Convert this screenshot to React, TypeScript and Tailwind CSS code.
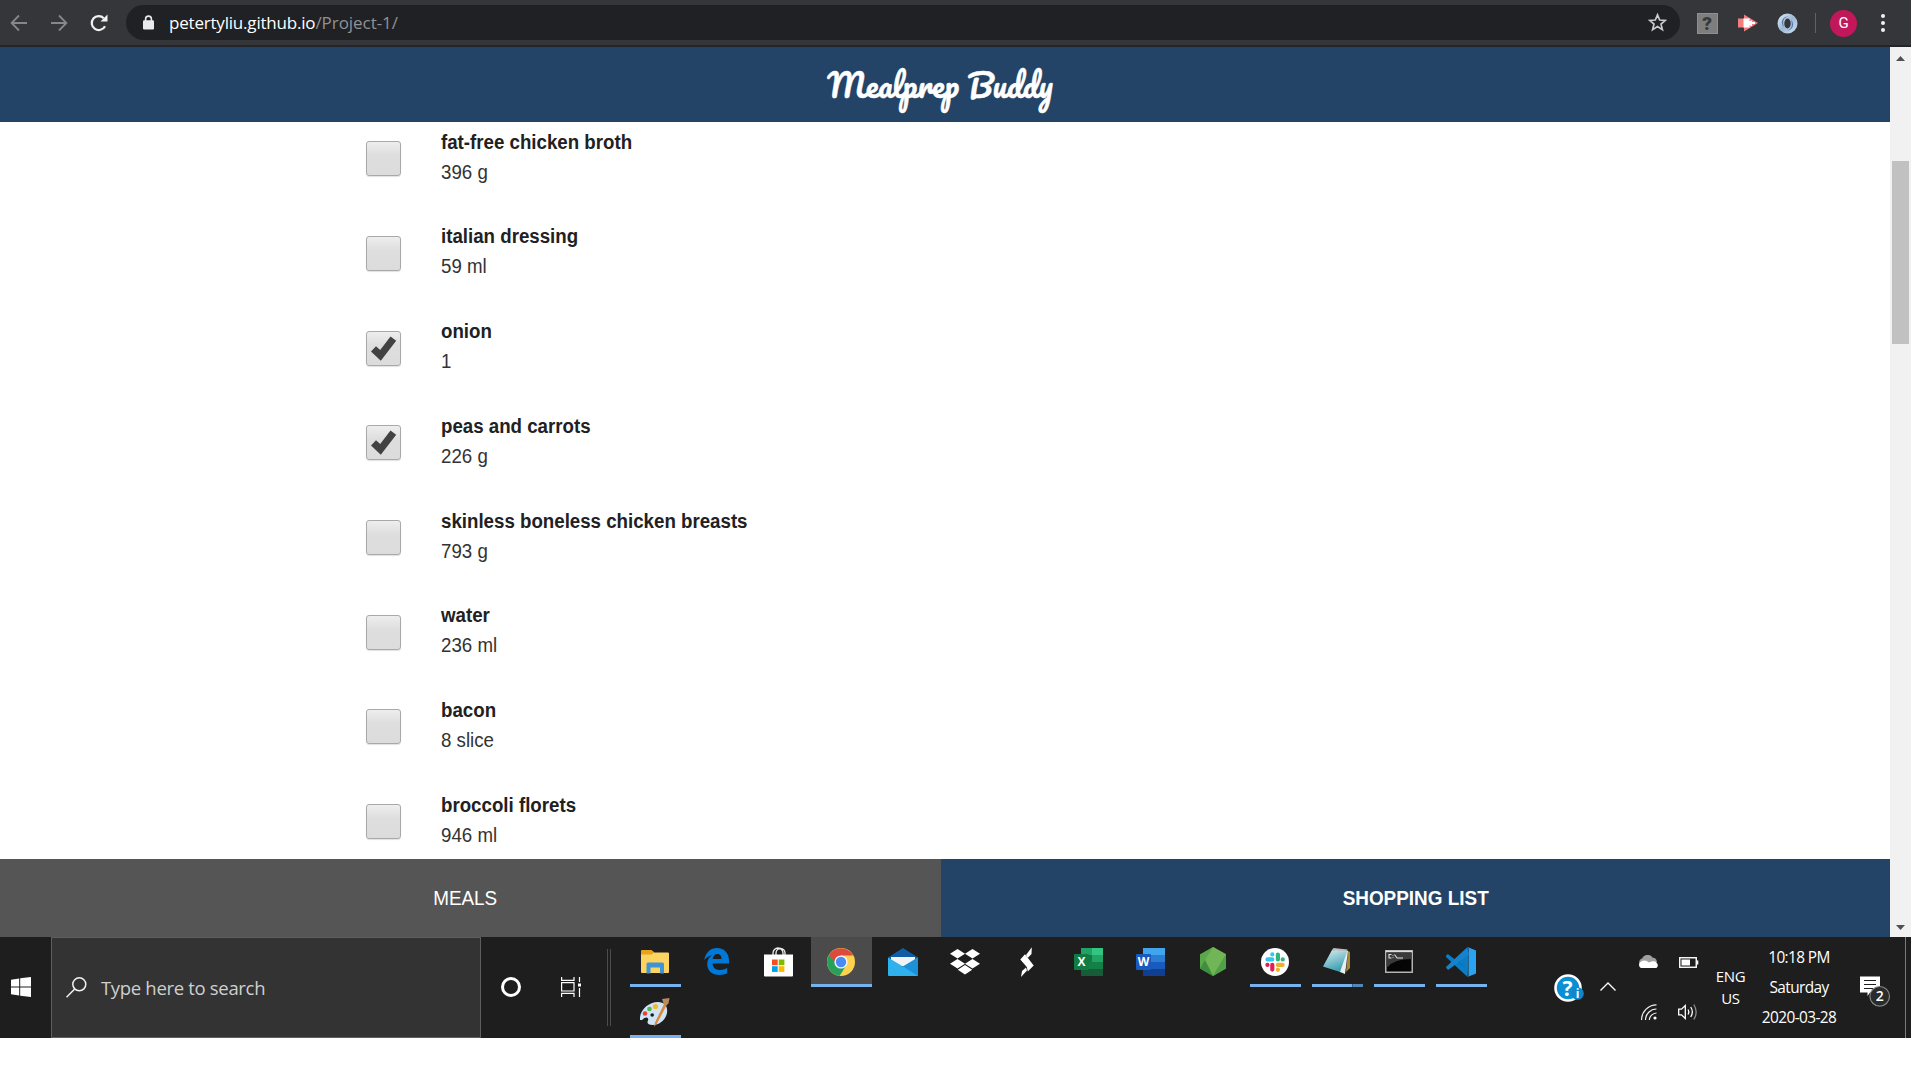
import React from "react";

const ui = "font-['Open_Sans','Noto_Sans',sans-serif]";

const items = [
  { name: "fat-free chicken broth", amount: "396 g", checked: false },
  { name: "italian dressing", amount: "59 ml", checked: false },
  { name: "onion", amount: "1", checked: true },
  { name: "peas and carrots", amount: "226 g", checked: true },
  { name: "skinless boneless chicken breasts", amount: "793 g", checked: false },
  { name: "water", amount: "236 ml", checked: false },
  { name: "bacon", amount: "8 slice", checked: false },
  { name: "broccoli florets", amount: "946 ml", checked: false },
];

function Toolbar() {
  return (
    <div className="flex h-[47px] w-full shrink-0 items-start border-b-2 border-[#222529] bg-[#35363a] pt-[5px]">
      <div className="flex h-[36px] w-[38px] items-center justify-center">
        <svg width="18" height="18" viewBox="0 0 18 18" fill="none" stroke="#85878a" strokeWidth="1.8">
          <path d="M17 9H2M9 1.5L1.6 9L9 16.5" />
        </svg>
      </div>
      <div className="flex h-[36px] w-[41px] items-center justify-center">
        <svg width="18" height="18" viewBox="0 0 18 18" fill="none" stroke="#85878a" strokeWidth="1.8">
          <path d="M1 9H16M9 1.5L16.4 9L9 16.5" />
        </svg>
      </div>
      <div className="flex h-[36px] w-[40px] items-center justify-center">
        <svg width="18" height="18" viewBox="0 0 18 18">
          <path d="M15 12.2A7 7 0 1 1 13.8 4.2" fill="none" stroke="#f1f1f2" strokeWidth="2.2" />
          <path d="M17.5 0.5V7.5H10.5Z" fill="#f1f1f2" />
        </svg>
      </div>
      <div className="ml-[7px] flex h-[35px] w-[1554px] items-center rounded-full bg-[#202124] pl-[17px] pr-[13px]">
        <svg width="11" height="15" viewBox="0 0 11 15">
          <path d="M2.6 6V4A2.9 2.9 0 0 1 8.4 4V6" fill="none" stroke="#e8eaed" strokeWidth="1.6" />
          <rect x="0" y="5.2" width="11" height="9.2" rx="1.2" fill="#e8eaed" />
        </svg>
        <span className={`ml-[15px] flex-1 whitespace-nowrap text-[17px] leading-[35px] tracking-[-0.2px] text-white ${ui}`}>
          petertyliu.github.io<span className="tracking-[-0.05px] text-[#8f9194]">/Project-1/</span>
        </span>
        <svg width="19" height="19" viewBox="0 0 19 19" fill="none" stroke="#c8cacd" strokeWidth="1.7">
          <path d="M9.5 1.8L11.7 7L17.3 7.4L13 11.1L14.4 16.6L9.5 13.6L4.6 16.6L6 11.1L1.7 7.4L7.3 7Z" />
        </svg>
      </div>
      <div className="ml-[7px] flex h-[36px] items-center">
        <div className="flex w-[40px] justify-center">
          <div className="flex h-[21px] w-[21px] items-center justify-center border border-[#8f8f8f] bg-[#7e7e7e] font-['Roboto',sans-serif] text-[19px] font-black leading-none text-[#37383a]">?</div>
        </div>
        <div className="flex w-[41px] justify-center">
          <svg width="20" height="18" viewBox="0 0 20 18">
            <path d="M0 4.5H6V0.5L20 9L6 17.5V13.5H0Z" fill="#f47c7c" />
            <path d="M5.5 4.5H12L11 7L14 6.500V8H17V10H14V12L11 11.5L12 13.5H5.5Z" fill="#fff" />
          </svg>
        </div>
        <div className="flex w-[40px] justify-center pr-px">
          <svg width="21" height="21" viewBox="0 0 21 21">
            <defs>
              <linearGradient id="ring" x1="0" y1="0" x2="1" y2="1">
                <stop offset="0" stopColor="#e4eef8" />
                <stop offset=".5" stopColor="#9db8d6" />
                <stop offset="1" stopColor="#d4e4f4" />
              </linearGradient>
            </defs>
            <path fillRule="evenodd" d="M10.5 .5A10 10 0 1 0 10.5 20.5A10 10 0 1 0 10.5 .5ZM10.5 5.5A3.2 5 0 1 1 10.5 15.5A3.2 5 0 1 1 10.5 5.5Z" fill="url(#ring)" />
            <path d="M11.5 3.5C6.500 4 5 9 7 14C3 10 5 3.500 11.5 3.500ZM9.5 17.500C14.500 17 16 12 14 7C18 11 16 17.500 9.500 17.500Z" fill="#4d76a6" />
          </svg>
        </div>
        <div className="ml-[7px] h-[20px] w-px bg-[#606164]" />
        <div className="ml-[14px] flex h-[27px] w-[27px] items-center justify-center rounded-full bg-[#c2185b] font-['Roboto',sans-serif] text-[15px] text-white">G</div>
        <div className="ml-[24px] flex flex-col gap-[3px]">
          <i className="h-[4px] w-[4px] rounded-full bg-[#f1f1f2]" />
          <i className="h-[4px] w-[4px] rounded-full bg-[#f1f1f2]" />
          <i className="h-[4px] w-[4px] rounded-full bg-[#f1f1f2]" />
        </div>
      </div>
    </div>
  );
}

function Checkbox({ checked }: { checked: boolean }) {
  return (
    <div className="flex h-[35px] w-[35px] shrink-0 items-center justify-center rounded-[3px] border border-[#a9a9a9] bg-linear-to-b from-[#eeeeee] via-[#dedede] via-40% to-[#dcdcdc] shadow-[0_1px_1px_rgba(0,0,0,0.12)]">
      {checked && (
        <svg width="27" height="25" viewBox="0 0 27 25">
          <path d="M1 15.500L6 10.200L10.200 14L20.500 .5L26.200 4.800L10.800 24.700Z" fill="#424242" />
        </svg>
      )}
    </div>
  );
}

function ShoppingList() {
  return (
    <div className="h-[737px] overflow-hidden bg-white pl-[366px] pt-[4.780px] font-['Liberation_Sans',Arial,sans-serif] text-[19.6px] leading-[30px]">
      {items.map((it) => (
        <div key={it.name} className="flex h-[94.700px] items-start">
          <div className="mt-[14.550px]">
            <Checkbox checked={it.checked} />
          </div>
          <div className="ml-[40px] origin-left scale-x-[0.954] whitespace-nowrap">
            <div className="font-bold text-[#212121]">{it.name}</div>
            <div className="text-[#333333]">{it.amount}</div>
          </div>
        </div>
      ))}
    </div>
  );
}

function Scrollbar() {
  return (
    <div className="flex w-[21px] shrink-0 flex-col items-center bg-[#f1f1f1]">
      <div className="flex h-[23px] items-center">
        <svg width="9" height="5" viewBox="0 0 9 5"><path d="M4.500 0L9 5H0Z" fill="#505050" /></svg>
      </div>
      <div className="mt-[91px] h-[183px] w-[17px] bg-[#c1c1c1]" />
      <div className="mt-auto flex h-[20px] items-center">
        <svg width="9" height="5" viewBox="0 0 9 5"><path d="M4.500 5L9 0H0Z" fill="#505050" /></svg>
      </div>
    </div>
  );
}

const icons = {
  explorer: (
    <svg width="28" height="24" viewBox="0 0 28 24">
      <path d="M0 1.500Q0 0 1.500 0H10L13 2.500H27Q28 2.500 28 3.500V22Q28 23 27 23H1Q0 23 0 22Z" fill="#fcd462" />
      <path d="M0 1.500Q0 0 1.500 0H10L13 2L11 4.500H0Z" fill="#e8a317" />
      <path d="M5.500 23.500V14Q5.500 12.500 7 12.500H21.500Q23 12.500 23 14V23.500H19V17.500H9.500V23.500Z" fill="#3f94d8" />
    </svg>
  ),
  edge: (
    <svg className="mr-px" width="25" height="27" viewBox="0 0 25 27">
      <path d="M.3 12C1.500 4.500 6.500 0 13 0C20.500 0 25 5.500 25 12.500V15.500H8.500C8.800 20 12 22 16 22C18.800 22 21 21.200 23.200 20V25.300C21 26.400 18.300 27 15.300 27C8 27 3.200 22.600 3.200 16C3.200 11.800 5.200 8.600 8.600 6.900C5.200 7.500 2.400 9.200 .3 12ZM8.700 11H17.500C17.500 7.800 16 6 13.300 6C10.800 6 9 8 8.700 11Z" fill="#0078d7" />
    </svg>
  ),
  store: (
    <svg className="mr-px" width="29" height="30" viewBox="0 0 29 30">
      <path d="M9 9V6A5 5 0 0 1 19 6V9M12 8V6A4.500 4.500 0 0 1 21 6V8" fill="none" stroke="#eee" strokeWidth="1.300" />
      <path d="M0 7.500H29V28.500Q29 29.500 28 29.500H1Q0 29.500 0 28.500Z" fill="#fff" />
      <path d="M8 12.500H13.700V18.200H8Z" fill="#f04e23" />
      <path d="M14.700 12.500H20.400V18.200H14.700Z" fill="#7fb900" />
      <path d="M8 19.200H13.700V24.900H8Z" fill="#009fe8" />
      <path d="M14.700 19.200H20.400V24.900H14.700Z" fill="#fdb900" />
    </svg>
  ),
  chrome: (
    <svg width="28" height="28" viewBox="0 0 28 28">
      <circle cx="14" cy="14" r="14" fill="#fdd24f" />
      <path d="M14 14L1.880 7A14 14 0 0 0 12.500 27.920L19.500 17Z" fill="#27a05a" />
      <path d="M14 14H8.500L1.880 7A14 14 0 0 1 26.120 7.500H14Z" fill="#dc4a3e" />
      <circle cx="14" cy="14" r="6.600" fill="#f4f6fa" />
      <circle cx="14" cy="14" r="5.200" fill="#4a8af4" />
    </svg>
  ),
  mail: (
    <svg width="30" height="28" viewBox="0 0 30 28">
      <path d="M0 9.500L15 0L30 9.500V14H0Z" fill="#0f5da6" />
      <path d="M3 9H27V18H3Z" fill="#f1f3f5" />
      <path d="M0 9.500L15 18.500L30 9.500V27Q30 28 29 28H1Q0 28 0 27Z" fill="#2fb1ee" />
      <path d="M30 9.500L15 18.500L30 28Z" fill="#1c90d8" />
    </svg>
  ),
  dropbox: (
    <svg width="30" height="26" viewBox="0 0 30 26" fill="#fff">
      <path d="M7.500 0L15 4.800L7.500 9.600L0 4.800ZM22.500 0L30 4.800L22.500 9.600L15 4.800ZM7.500 9.900L15 14.700L7.500 19.500L0 14.700ZM22.500 9.900L30 14.700L22.500 19.500L15 14.700ZM15 16L22.200 20.700L15 25.500L7.800 20.700Z" />
    </svg>
  ),
  bolt: (
    <svg width="14" height="30" viewBox="0 0 14 30" fill="#fff">
      <path d="M11.800 .3L11.500 7L7.700 11L6 8Z" />
      <path d="M.3 12.500L5 7.300L13.700 18.500L7.800 24.500L6.800 20Z" />
      <path d="M1 30L2 24L6 20.500L7 23.500Z" />
    </svg>
  ),
  excel: (
    <svg className="mr-px" width="29" height="28" viewBox="0 0 29 28">
      <path d="M7 0H18V7H7Z" fill="#21a366" /><path d="M18 0H29V7H18Z" fill="#33c481" />
      <path d="M7 7H18V14H7Z" fill="#107c41" /><path d="M18 7H29V14H18Z" fill="#21a366" />
      <path d="M7 14H29V21H7Z" fill="#128047" /><path d="M7 21H29V28H7Z" fill="#185c37" />
      <rect y="6" width="15" height="16" rx="1" fill="#107c41" />
      <text x="7.500" y="18" textAnchor="middle" fontFamily="Open Sans" fontSize="12" fontWeight="700" fill="#fff">X</text>
    </svg>
  ),
  word: (
    <svg className="mr-px" width="29" height="28" viewBox="0 0 29 28">
      <path d="M7 0H29V7H7Z" fill="#41a5ee" /><path d="M7 7H29V14H7Z" fill="#2b7cd3" />
      <path d="M7 14H29V21H7Z" fill="#185abd" /><path d="M7 21H29V28H7Z" fill="#103f91" />
      <rect y="6" width="15" height="16" rx="1" fill="#185abd" />
      <text x="7.500" y="18" textAnchor="middle" fontFamily="Open Sans" fontSize="12" fontWeight="700" fill="#fff">W</text>
    </svg>
  ),
  node: (
    <svg width="26" height="29" viewBox="0 0 26 29">
      <path d="M13 0L26 7.200V21.500L13 29L0 21.500V7.200Z" fill="#5aa84a" />
      <path d="M13 0L26 7.200L13 29L5 13Z" fill="#70b656" />
      <path d="M0 21.500L5 13L13 29Z" fill="#3d8f3f" />
      <path d="M26 7.200V21.500L13 29Z" fill="#539f48" />
    </svg>
  ),
  slack: (
    <svg width="28" height="28" viewBox="0 0 28 28">
      <circle cx="14" cy="14" r="14" fill="#fff" />
      <g strokeWidth="4.200" strokeLinecap="round">
        <path d="M11.300 6.400V6.500M6.500 11.400H11.300" stroke="#36c5f0" />
        <path d="M16.900 6.500V11.400M21.800 11.400H21.700" stroke="#2eb67d" />
        <path d="M16.900 16.900H21.600M16.900 21.800V21.700" stroke="#ecb22e" />
        <path d="M11.300 16.900V21.600M6.400 16.900H6.500" stroke="#e01e5a" />
      </g>
    </svg>
  ),
  notepad: (
    <svg className="mr-px" width="27" height="27" viewBox="0 0 27 27">
      <defs>
        <linearGradient id="pad" x1="0" y1="0" x2=".4" y2="1">
          <stop offset="0" stopColor="#d9eef2" /><stop offset="1" stopColor="#3f9fb0" />
        </linearGradient>
      </defs>
      <path d="M25 3L27 4V20L23 24Z" fill="#a88638" />
      <path d="M11 1L25 3L22 26L17 24Z" fill="#e6f0f2" />
      <path d="M9 2L24 4L17 24L0 18.500Z" fill="url(#pad)" />
      <path d="M9 2L24 4L24.500 1.500L10.500 0Z" fill="#b9bec0" />
    </svg>
  ),
  cmd: (
    <svg width="28" height="23" viewBox="0 0 28 23">
      <rect x=".75" y=".75" width="26.500" height="21.500" fill="#050505" stroke="#b4b4b4" strokeWidth="1.500" />
      <path d="M1.500 2.500H26.500V9Q9 9 3 17L1.500 16Z" fill="#3a3a3a" />
      <path d="M1 1.500H27" stroke="#ddd" strokeWidth="1.500" />
      <path d="M6.500 4.500H4V8H6.500M8 5V5.800M8 7V7.800M9.500 4.500L12 8H18" fill="none" stroke="#ddd" strokeWidth="1.100" />
    </svg>
  ),
  code: (
    <svg width="30" height="30" viewBox="0 0 30 30">
      <path d="M22 7.500V22.500L2.500 7.500Q1.800 7 1 7.600L0 9Q-.2 10 .5 10.600L21.500 30L22 22.500L12 15Z" fill="#0b7dc6" />
      <path d="M21.500 0L.5 19.400Q-.2 20 .3 21L1.500 22.500Q2 23 2.800 22.500L22.500 7.800Z" fill="#1583ce" />
      <path d="M21.500 0L30 3.500V26.500L21.500 30Q22.500 29.500 22.500 28.500V1.500Q22.500 .5 21.500 0Z" fill="#29a3f2" />
    </svg>
  ),
  paint: (
    <svg width="30" height="29" viewBox="0 0 30 29">
      <path d="M0 22C-1 13 8 4 18 4C25 4 28 9 27 15C26 21 20 27 13 27C8 27 6.500 25 8 22.500C9 20.500 7 18.500 4.500 20C2.500 21.200 2.500 22.500 0 22Z" fill="#cfe5f3" />
      <circle cx="12.200" cy="17" r="1.800" fill="#1c1c1c" />
      <circle cx="5" cy="15.500" r="2.300" fill="#e8433a" />
      <circle cx="9.500" cy="11" r="2.300" fill="#4fb848" />
      <circle cx="15.500" cy="8.500" r="2.600" fill="#f5b92e" />
      <path d="M24.500 5L27 6.500L17 25.500L14 29L15 24.500Z" fill="#d98a3e" />
      <path d="M22 1L29.500 0L28.500 5.500L26 7.500L23.500 5.500Z" fill="#b98c60" />
    </svg>
  ),
};

type Slot = { id: keyof typeof icons; open?: boolean; active?: boolean; stacked?: boolean };
const apps: Slot[] = [
  { id: "explorer", open: true },
  { id: "edge" },
  { id: "store" },
  { id: "chrome", open: true, active: true },
  { id: "mail" },
  { id: "dropbox" },
  { id: "bolt" },
  { id: "excel" },
  { id: "word" },
  { id: "node" },
  { id: "slack", open: true },
  { id: "notepad", open: true, stacked: true },
  { id: "cmd", open: true },
  { id: "code", open: true },
];

function AppSlot({ id, open, active, stacked }: Slot) {
  return (
    <div className="flex w-[62px] justify-center">
      <div className={`flex h-[50px] flex-col items-center ${active ? "w-[61px] bg-[#4b4b4b]" : "w-[51px]"}`}>
        <div className="flex h-[47px] items-center pt-[2px]">{icons[id]}</div>
        {open && (
          <div className="flex h-[3px] w-full bg-[#76b3ee]">
            {stacked && <div className="ml-auto w-[11px] border-l border-[#3f6286] bg-[#5387ba]" />}
          </div>
        )}
      </div>
    </div>
  );
}

function Taskbar() {
  return (
    <div className={`flex h-[101px] w-full shrink-0 bg-[#1e1e1e] text-white ${ui}`}>
      <div className="flex w-[51px] items-center pl-[11px]">
        <svg className="-mt-px" width="20" height="20" viewBox="0 0 20 20" fill="#fff">
          <path d="M0 2.800L8.200 1.500V9.500H0ZM9.200 1.300L20 0V9.500H9.200ZM0 10.500H8.200V18.500L0 17.300ZM9.200 10.500H20V20L9.200 18.700Z" />
        </svg>
      </div>
      <div className="flex w-[430px] items-center border border-[#5e5e5e] bg-[#333333] pl-[14px]">
        <svg className="-mt-px" width="21" height="21" viewBox="0 0 21 21" fill="none" stroke="#f2f2f2" strokeWidth="1.500">
          <circle cx="13.300" cy="7.300" r="6.500" /><path d="M8.700 12L.5 20.300" />
        </svg>
        <span className="ml-[14px] whitespace-nowrap text-[18.500px] tracking-[-0.32px] text-[#cfcfcf]">Type here to search</span>
      </div>
      <div className="-mt-px ml-[20px] flex w-[60px] items-center">
        <div className="h-[20px] w-[20px] rounded-full border-[3px] border-white" />
      </div>
      <div className="-mt-px flex w-[46px] items-center">
        <svg width="20" height="20" viewBox="0 0 20 20" fill="none" stroke="#fff" strokeWidth="1.200">
          <path d="M.6 0V3.400H13V0M.6 20V16.400H13V20M.6 5.600H13V14H.6ZM18.500 0V5M18.500 11V20" />
          <path d="M17 6.500H20V9.500H17Z" fill="#fff" stroke="none" />
        </svg>
      </div>
      <div className="mt-[12px] h-[77px] w-[4px] border-x border-[#4c4c4c]" />
      <div className="ml-[13px] flex w-[868px] flex-col">
        <div className="flex h-[50px]">{apps.map((a) => <AppSlot key={a.id} {...a} />)}</div>
        <div className="mt-[1px] flex h-[50px]"><AppSlot id="paint" open /></div>
      </div>
      <div className="ml-[62px] flex w-[46px] items-center pt-px">
        <svg width="31" height="30" viewBox="0 0 31 30">
          <circle cx="14" cy="15" r="12.500" fill="#0a8fd4" stroke="#fff" strokeWidth="2.600" />
          <text x="13.500" y="22.500" textAnchor="middle" fontFamily="Open Sans" fontSize="21" fontWeight="700" fill="#fff">?</text>
          <circle cx="23.500" cy="20.500" r="6.300" fill="#0f87c8" />
          <text x="23.500" y="25" textAnchor="middle" fontFamily="Open Sans" fontSize="12" fontWeight="700" fill="#fff">i</text>
        </svg>
      </div>
      <div className="flex w-[38px] items-center">
        <svg className="-mt-[2px]" width="16" height="9" viewBox="0 0 16 9" fill="none" stroke="#fff" strokeWidth="1.300"><path d="M.5 8.500L8 1L15.500 8.500" /></svg>
      </div>
      <div className="grid w-[79px] grid-cols-[40px_39px] grid-rows-[50px_51px] items-center">
        <svg className="-mt-px" width="20" height="13" viewBox="0 0 20 13">
          <path d="M1.500 9A4 4 0 0 1 4 3.500A6 6 0 0 1 14.500 2.500A5 5 0 0 1 19 7L10 11Z" fill="#a0a0a0" />
          <path d="M3 13A3.500 3.500 0 0 1 2.500 7Q7 4 11 7.500Q16 5 18.500 7.500Q21 10 19 12.500Q18.500 13 17 13Z" fill="#fff" />
        </svg>
        <svg className="ml-px" width="20" height="11" viewBox="0 0 20 11">
          <rect x=".75" y=".75" width="16.500" height="9.500" fill="none" stroke="#fff" strokeWidth="1.400" />
          <path d="M2.500 2.500H11V8.500H2.500ZM18 3.500H19.300V7.500H18Z" fill="#fff" />
        </svg>
        <svg className="-mt-px ml-[3px]" width="16" height="16" viewBox="0 0 16 16" fill="none" stroke="#f0f0f0" strokeWidth="1.200">
          <path d="M.6 16A15 15 0 0 1 15.500 .8M4.500 16A11 11 0 0 1 15.500 5M8.300 16A7.500 7.500 0 0 1 15.500 9" />
          <circle cx="14" cy="14" r="1.600" fill="#fff" stroke="none" />
        </svg>
        <svg className="-mt-[2px]" width="20" height="18" viewBox="0 0 20 18" fill="none" stroke="#fff" strokeWidth="1.300">
          <path d="M.7 6.200H3.500L7.300 2.500V15.500L3.500 11.800H.7ZM10 6.500Q11.600 9 10 11.500M12.700 4Q16 9 12.700 14" />
          <path d="M15.800 1.500Q20.500 9 15.800 16.500" stroke="#8b8b8b" />
        </svg>
      </div>
      <div className="-mt-[2px] flex w-[28px] flex-col items-center justify-center pr-px text-[15px] leading-[22px] tracking-[-0.3px]">
        <span>ENG</span>
        <span>US</span>
      </div>
      <div className="ml-[14px] flex w-[80px] flex-col items-center justify-center whitespace-nowrap text-[15.400px] leading-[30px] tracking-[-0.600px]">
        <span>10:18 PM</span>
        <span>Saturday</span>
        <span>2020-03-28</span>
      </div>
      <div className="ml-[21px] flex w-[45px] items-start pt-[39px]">
        <svg width="31" height="31" viewBox="0 0 31 31">
          <path d="M0 0.500H20V16.500H10L7.500 20V16.500H0Z" fill="#fff" />
          <path d="M4 4.500H16M4 8.500H16M4 12.500H13" stroke="#1e1e1e" strokeWidth="1.200" />
          <circle cx="19.700" cy="20.300" r="9.800" fill="#2b2b2b" stroke="#858585" strokeWidth="1.200" />
          <text x="19.700" y="25.300" textAnchor="middle" fontFamily="Open Sans" fontSize="14" fontWeight="600" fill="#fff">2</text>
        </svg>
      </div>
      <div className="w-px bg-[#7a7a7a]" />
    </div>
  );
}

export default function App() {
  return (
    <div className="h-[1080px] w-full overflow-hidden bg-white">
      <div className="flex h-[1038px] w-[1911px] flex-col">
        <Toolbar />
        <div className="flex h-[890px] shrink-0">
          <div className="flex w-[1890px] shrink-0 flex-col">
            <div className="flex h-[75px] shrink-0 items-center justify-center bg-[#234466] pr-[9px] pb-[2px]">
              <h1 className="scale-x-[0.955] whitespace-nowrap font-['Pacifico','Lato',cursive] text-[32.700px] font-normal leading-[60px] text-white [-webkit-text-stroke:0.500px_white]">Mealprep Buddy</h1>
            </div>
            <ShoppingList />
            <div className="flex h-[78px] shrink-0 font-['Liberation_Sans',Arial,sans-serif] text-[19.600px] text-white">
              <div className="flex w-[941px] items-center justify-center bg-[#555555] pr-[10px] pt-[2px]">
                <span className="scale-x-[0.963]">MEALS</span>
              </div>
              <div className="flex flex-1 items-center justify-center bg-[#234466] pt-[2px]">
                <span className="scale-x-[0.965] font-bold">SHOPPING LIST</span>
              </div>
            </div>
          </div>
          <Scrollbar />
        </div>
        <Taskbar />
      </div>
    </div>
  );
}
